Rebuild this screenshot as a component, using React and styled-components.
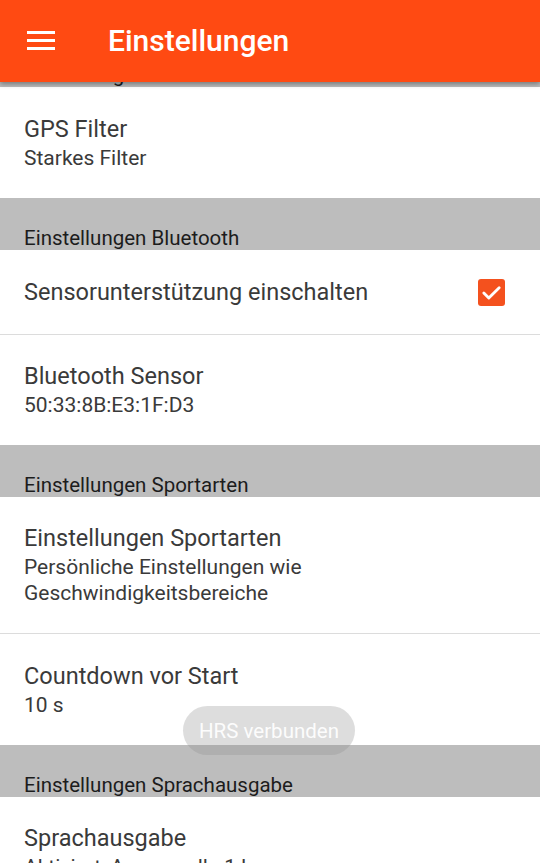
import React from 'react';
import styled, { createGlobalStyle } from 'styled-components';

const GlobalStyle = createGlobalStyle`
  html, body {
    margin: 0;
    padding: 0;
    background: #fff;
  }
  body {
    font-family: Roboto, 'Noto Sans', sans-serif;
  }
`;

const Screen = styled.div`
  position: relative;
  width: 540px;
  height: 863px;
  overflow: hidden;
  background: #fff;
`;

const Toolbar = styled.header`
  position: relative;
  z-index: 2;
  height: 82px;
  display: flex;
  align-items: center;
  background: #ff4a12;
  box-shadow: 0 2px 5px rgba(0, 0, 0, 0.38);
`;

const MenuButton = styled.div`
  width: 108px;
  display: flex;
  padding-left: 27px;
  box-sizing: border-box;
  align-items: center;
`;

const Title = styled.h1`
  margin: 0;
  color: #fff;
  font-size: 30px;
  font-weight: 500;
  line-height: 36px;
`;

// list is scrolled a little, first category header sits under the toolbar
const List = styled.div`
  margin-top: -47px;
`;

const SectionHeader = styled.div`
  height: 52px;
  box-sizing: border-box;
  display: flex;
  align-items: flex-end;
  padding: 0 24px 1px;
  background: #bdbdbd;
  color: #1c1c1c;
  font-size: 20.5px;
  line-height: 22px;
`;

const Row = styled.div`
  display: flex;
  align-items: center;
  justify-content: space-between;
  min-height: ${({ height }) => height}px;
  box-sizing: border-box;
  padding: 0 35px 0 24px;
  border-bottom: ${({ divider }) => (divider ? '1.5px solid #dcdcdc' : 'none')};
`;

const RowText = styled.div`
  display: flex;
  flex-direction: column;
`;

const RowTitle = styled.div`
  color: #3a3a3a;
  font-size: 23.5px;
  line-height: 28px;
`;

const RowSummary = styled.div`
  color: #3a3a3a;
  font-size: 21px;
  line-height: 26px;
  margin-top: 2px;
`;

const Checkbox = styled.div`
  width: 27px;
  height: 27px;
  border-radius: 3px;
  background: #f4511e;
  display: flex;
  align-items: center;
  justify-content: center;
`;

const Toast = styled.div`
  position: absolute;
  left: 183px;
  top: 706px;
  width: 172px;
  height: 49px;
  border-radius: 25px;
  background: rgba(141, 141, 141, 0.3);
  color: rgba(255, 255, 255, 0.95);
  font-size: 20.5px;
  display: flex;
  align-items: center;
  justify-content: center;
  z-index: 3;
`;

const MenuIcon = () => (
  <svg width="28" height="20" viewBox="0 0 28 20">
    <rect x="0" y="0" width="28" height="3" fill="#fff" />
    <rect x="0" y="8" width="28" height="3" fill="#fff" />
    <rect x="0" y="16" width="28" height="3" fill="#fff" />
  </svg>
);

const CheckIcon = () => (
  <svg width="23" height="23" viewBox="0 0 24 24">
    <path d="M4 12.5l5.2 5.2L20 7" fill="none" stroke="#fff" strokeWidth="3" strokeLinecap="round" strokeLinejoin="round" />
  </svg>
);

const Preference = ({ title, summary, height = 110, divider }) => (
  <Row height={height} divider={divider}>
    <RowText>
      <RowTitle>{title}</RowTitle>
      {summary && <RowSummary>{summary}</RowSummary>}
    </RowText>
  </Row>
);

const App = () => (
  <Screen>
    <GlobalStyle />
    <Toolbar>
      <MenuButton>
        <MenuIcon />
      </MenuButton>
      <Title>Einstellungen</Title>
    </Toolbar>
    <List>
      <SectionHeader>Einstellungen GPS</SectionHeader>
      <Preference title="GPS Filter" summary="Starkes Filter" height={111} />
      <SectionHeader>Einstellungen Bluetooth</SectionHeader>
      <Row height={85} divider>
        <RowTitle>Sensorunterstützung einschalten</RowTitle>
        <Checkbox>
          <CheckIcon />
        </Checkbox>
      </Row>
      <Preference title="Bluetooth Sensor" summary="50:33:8B:E3:1F:D3" />
      <SectionHeader>Einstellungen Sportarten</SectionHeader>
      <Preference
        title="Einstellungen Sportarten"
        summary={<>Persönliche Einstellungen wie<br />Geschwindigkeitsbereiche</>}
        height={137}
        divider
      />
      <Preference title="Countdown vor Start" summary="10 s" height={111} />
      <SectionHeader>Einstellungen Sprachausgabe</SectionHeader>
      <Preference title="Sprachausgabe" summary="Aktiviert, Ansage alle 1 km" />
    </List>
    <Toast>HRS verbunden</Toast>
  </Screen>
);

export default App;
